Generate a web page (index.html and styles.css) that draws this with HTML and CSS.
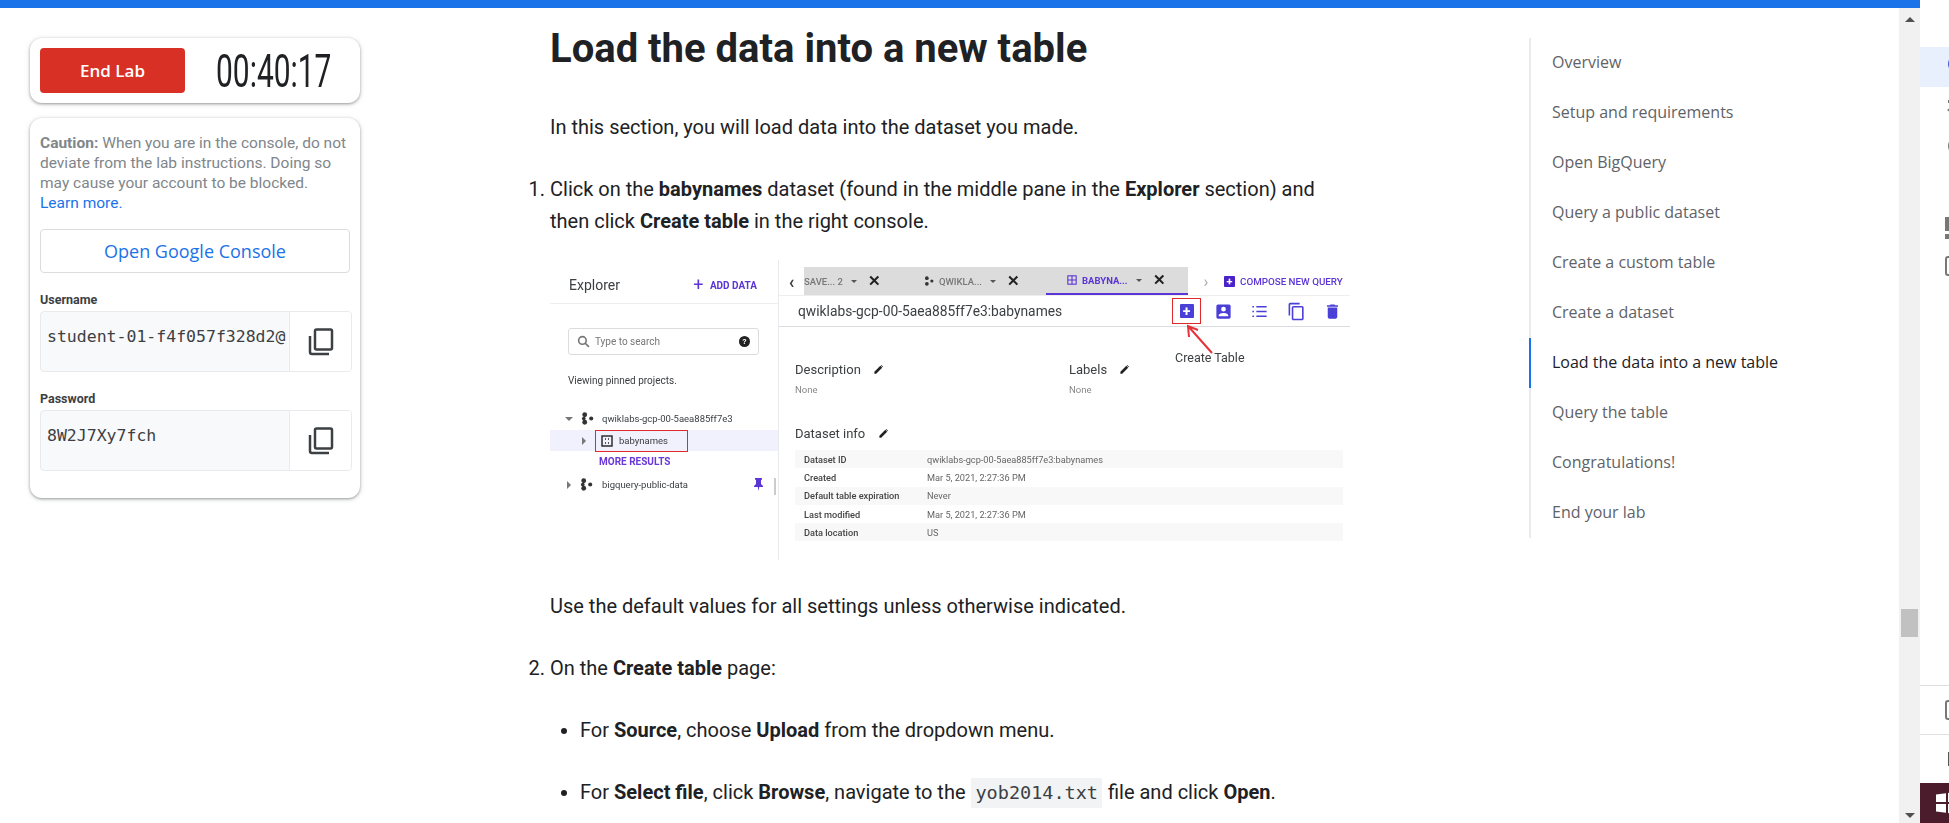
FILE: index.html
```html
<!DOCTYPE html>
<html lang="en">
<head>
    <meta charset="UTF-8">
    <meta name="viewport" content="width=device-width, initial-scale=1.0">
    <title>Load the data into a new table</title>
    <link rel="stylesheet" href="styles.css">
</head>
<body>
<div class="app">
    <div class="topbar"></div>
    <div class="workspace">
        <aside class="lab-panel">
            <div class="card timer-card">
                <button class="end-lab">End Lab</button>
                <span class="timer"><span class="timer-digits">00:40:17</span></span>
            </div>
            <div class="card console-card">
                <p class="caution"><b>Caution:</b> When you are in the console, do not deviate from the lab instructions. Doing so may cause your account to be blocked. <a href="#">Learn more.</a></p>
                <button class="open-console">Open Google Console</button>
                <label class="field-label">Username</label>
                <div class="field">
                    <span class="field-value">student-01-f4f057f328d2@</span>
                    <span class="field-copy"><svg width="26" height="30" viewBox="0 0 26 30" fill="none" stroke="#3c4043" stroke-width="2.5"><rect x="7" y="2.5" width="17" height="20" rx="1.5"/><path d="M2 9v16a2 2 0 0 0 2 2h17"/></svg></span>
                </div>
                <label class="field-label">Password</label>
                <div class="field">
                    <span class="field-value">8W2J7Xy7fch</span>
                    <span class="field-copy"><svg width="26" height="30" viewBox="0 0 26 30" fill="none" stroke="#3c4043" stroke-width="2.5"><rect x="7" y="2.5" width="17" height="20" rx="1.5"/><path d="M2 9v16a2 2 0 0 0 2 2h17"/></svg></span>
                </div>
            </div>
        </aside>

        <main class="lesson">
            <h1>Load the data into a new table</h1>
            <p>In this section, you will load data into the dataset you made.</p>
            <ol>
                <li>
                    <p>Click on the <b>babynames</b> dataset (found in the middle pane in the <b>Explorer</b> section) and then click <b>Create table</b> in the right console.</p>
                    <div class="shot">
                        <div class="shot-left">
                            <div class="explorer-head"><span>Explorer</span><span class="add-data"><i class="plus">+</i> ADD DATA</span></div>
                            <div class="search-box">
                                <svg width="13" height="13" viewBox="0 0 24 24" fill="none" stroke="#777" stroke-width="3"><circle cx="10" cy="10" r="7"/><path d="M15 15l7 7"/></svg>
                                <span>Type to search</span>
                                <span class="help-dot">?</span>
                            </div>
                            <div class="pinned">Viewing pinned projects.</div>
                            <div class="tree-row"><i class="caret-down"></i><svg class="project" width="13" height="13" viewBox="0 0 14 14"><circle cx="4" cy="3" r="2.6"/><circle cx="4" cy="11" r="2.6"/><circle cx="11" cy="7" r="2.2"/><circle cx="3" cy="7" r="2"/></svg><span>qwiklabs-gcp-00-5aea885ff7e3</span></div>
                            <div class="tree-row dataset-row">
                                <i class="caret-right"></i>
                                <span class="red-box"><svg width="12" height="12" viewBox="0 0 12 12" fill="none" stroke="#222" stroke-width="1.4"><rect x="1" y="1" width="10" height="10"/><path d="M4 4h1M7 4h1M4 8h1M7 8h1"/></svg><span>babynames</span></span>
                            </div>
                            <div class="more-results">MORE RESULTS</div>
                            <div class="tree-row public-row"><i class="caret-right"></i><svg class="project" width="13" height="13" viewBox="0 0 14 14"><circle cx="4" cy="3" r="2.6"/><circle cx="4" cy="11" r="2.6"/><circle cx="11" cy="7" r="2.2"/><circle cx="3" cy="7" r="2"/></svg><span>bigquery-public-data</span><svg class="pin" width="11" height="13" viewBox="0 0 11 13"><path d="M2 0h7v1.500L8 2v4l2 2v1H6.200L5.500 13 4.800 9H1V8l2-2V2L2 1.500z"/></svg></div>
                            <span class="pane-scroll"></span>
                        </div>
                        <div class="shot-right">
                            <div class="tabs">
                                <span class="tab-prev">‹</span>
                                <div class="tab-strip">
                                    <span class="tab tab-save">SAVE... 2 <i class="tab-caret"></i><b class="tab-x">✕</b></span>
                                    <span class="tab tab-qwik"><svg class="project" width="10" height="10" viewBox="0 0 14 14"><circle cx="4" cy="3" r="2.6"/><circle cx="4" cy="11" r="2.6"/><circle cx="11" cy="7" r="2.2"/></svg>QWIKLA... <i class="tab-caret"></i><b class="tab-x">✕</b></span>
                                    <span class="tab tab-active"><svg width="10" height="10" viewBox="0 0 12 12" fill="none" stroke="#5b35d5" stroke-width="1.3"><rect x="1" y="1" width="10" height="10"/><path d="M1 6h10M6 1v10"/></svg>BABYNA... <i class="tab-caret"></i><b class="tab-x">✕</b></span>
                                </div>
                                <span class="tab-next">›</span>
                                <span class="compose"><i class="compose-icon">+</i>COMPOSE NEW QUERY</span>
                            </div>
                            <div class="dataset-bar">
                                <span class="dataset-title">qwiklabs-gcp-00-5aea885ff7e3:babynames</span>
                                <span class="tool-create"><i class="compose-icon big">+</i></span>
                                <span class="tool"><svg width="19" height="19" viewBox="0 0 24 24" fill="#4a3fd6"><path d="M3 5v14a2 2 0 0 0 2 2h14a2 2 0 0 0 2-2V5a2 2 0 0 0-2-2H5a2 2 0 0 0-2 2zm12 4a3 3 0 1 1-6 0 3 3 0 0 1 6 0zm-9 8c0-2 4-3 6-3s6 1 6 3v1H6v-1z"/></svg></span>
                                <span class="tool"><svg width="19" height="19" viewBox="0 0 24 24" fill="none" stroke="#4a3fd6" stroke-width="2"><path d="M8 6h13M8 12h13M8 18h13M3 6h2M3 12h2M3 18h2"/></svg></span>
                                <span class="tool"><svg width="19" height="19" viewBox="0 0 24 24" fill="#4a3fd6"><path d="M16 1H4c-1 0-2 1-2 2v14h2V3h12V1zm3 4H8c-1 0-2 1-2 2v14c0 1 1 2 2 2h11c1 0 2-1 2-2V7c0-1-1-2-2-2zm0 16H8V7h11v14z"/></svg></span>
                                <span class="tool"><svg width="19" height="19" viewBox="0 0 24 24" fill="#4a3fd6"><path d="M6 19c0 1 1 2 2 2h8c1 0 2-1 2-2V7H6v12zM19 4h-3.500l-1-1h-5l-1 1H5v2h14V4z"/></svg></span>
                            </div>
                            <div class="create-note">Create Table</div>
                            <svg class="create-arrow" width="30" height="32" viewBox="0 0 30 32" fill="none" stroke="#e5333a" stroke-width="2"><path d="M27 29L3 2M4 13L3 2 13 6"/></svg>
                            <div class="meta-row">
                                <div class="meta-col">
                                    <div class="meta-title">Description <svg class="pencil" width="11" height="11" viewBox="0 0 24 24"><path d="M3 21v-4L16 4l4 4L7 21zM18 2l4 4-1 1-4-4z"/></svg></div>
                                    <div class="meta-none">None</div>
                                </div>
                                <div class="meta-col">
                                    <div class="meta-title">Labels <svg class="pencil" width="11" height="11" viewBox="0 0 24 24"><path d="M3 21v-4L16 4l4 4L7 21zM18 2l4 4-1 1-4-4z"/></svg></div>
                                    <div class="meta-none">None</div>
                                </div>
                            </div>
                            <div class="meta-title info-title">Dataset info <svg class="pencil" width="11" height="11" viewBox="0 0 24 24"><path d="M3 21v-4L16 4l4 4L7 21zM18 2l4 4-1 1-4-4z"/></svg></div>
                            <div class="info-table">
                                <div class="info-row"><b>Dataset ID</b><span>qwiklabs-gcp-00-5aea885ff7e3:babynames</span></div>
                                <div class="info-row"><b>Created</b><span>Mar 5, 2021, 2:27:36 PM</span></div>
                                <div class="info-row"><b>Default table expiration</b><span>Never</span></div>
                                <div class="info-row"><b>Last modified</b><span>Mar 5, 2021, 2:27:36 PM</span></div>
                                <div class="info-row"><b>Data location</b><span>US</span></div>
                            </div>
                        </div>
                    </div>
                    <p>Use the default values for all settings unless otherwise indicated.</p>
                </li>
                <li>
                    <p>On the <b>Create table</b> page:</p>
                    <ul>
                        <li><p>For <b>Source</b>, choose <b>Upload</b> from the dropdown menu.</p></li>
                        <li><p>For <b>Select file</b>, click <b>Browse</b>, navigate to the <code>yob2014.txt</code> file and click <b>Open</b>.</p></li>
                    </ul>
                </li>
            </ol>
        </main>

        <nav class="toc">
            <a href="#">Overview</a>
            <a href="#">Setup and requirements</a>
            <a href="#">Open BigQuery</a>
            <a href="#">Query a public dataset</a>
            <a href="#">Create a custom table</a>
            <a href="#">Create a dataset</a>
            <a href="#" class="active">Load the data into a new table</a>
            <a href="#">Query the table</a>
            <a href="#">Congratulations!</a>
            <a href="#">End your lab</a>
        </nav>

        <div class="scrollbar">
            <i class="arrow-up"></i>
            <span class="thumb"></span>
            <i class="arrow-down"></i>
        </div>
    </div>
</div>

<div class="rail">
    <div class="rail-item rail-active"><svg width="24" height="24" viewBox="0 0 24 24" fill="none" stroke="#3b5fc4" stroke-width="2"><circle cx="12" cy="12" r="8"/></svg></div>
    <div class="rail-item rail-gap1"><svg width="24" height="24" viewBox="0 0 24 24" fill="#777"><path d="M2 12l7-5v10z"/><rect x="3" y="2" width="8" height="3"/></svg></div>
    <div class="rail-item rail-gap2"><svg width="24" height="24" viewBox="0 0 24 24" fill="none" stroke="#777" stroke-width="2"><circle cx="12" cy="12" r="8"/></svg></div>
    <div class="rail-item rail-gap3"><svg width="24" height="24" viewBox="0 0 24 24" fill="#777"><rect x="0" y="1" width="5" height="14"/><rect x="0" y="18" width="5" height="5"/></svg></div>
    <div class="rail-item rail-gap4"><svg width="24" height="24" viewBox="0 0 24 24" fill="none" stroke="#777" stroke-width="2"><rect x="1" y="3" width="18" height="18" rx="2"/><path d="M6 9h9M6 15h9"/></svg></div>
    <div class="rail-bottom">
        <div class="rail-cell"><svg width="24" height="24" viewBox="0 0 24 24" fill="none" stroke="#777" stroke-width="2"><rect x="1" y="3" width="18" height="18" rx="2"/><path d="M6 9h9M6 15h9"/></svg></div>
        <div class="rail-cell"><svg width="24" height="24" viewBox="0 0 24 24" fill="#555"><rect x="3" y="5" width="3" height="14"/></svg></div>
        <div class="rail-win"><svg width="24" height="24" viewBox="0 0 24 24" fill="#fff"><path d="M0 3.500l10-1.300V11H0zM12 2l12-1.600V11H12zM0 13h10v8.800L0 20.500zM12 13h12v10.600L12 22z"/></svg></div>
    </div>
</div>
</body>
</html>
```

FILE: styles.css
```css
*{box-sizing:border-box;}
html,body{margin:0;height:100%;overflow:hidden;}
body{display:flex;font-family:Roboto,sans-serif;color:#202124;background:#fff;}

.app{width:1920px;height:823px;display:flex;flex-direction:column;flex:none;}
.topbar{height:8px;background:#1a73e8;flex:none;}
.workspace{flex:1;display:flex;min-height:0;}

/* left lab panel */
.lab-panel{width:390px;flex:none;padding:30px 30px 0;}
.card{background:#fff;border-radius:12px;box-shadow:0 1px 3px rgba(60,64,67,.5),0 1px 6px rgba(60,64,67,.1);}
.timer-card{height:65px;padding:10px;display:flex;align-items:center;}
.end-lab{width:145px;height:45px;flex:none;background:#d93025;color:#fff;border:0;border-radius:4px;font:600 17px "Open Sans",sans-serif;}
.timer{flex:1;min-width:0;text-align:center;white-space:nowrap;}
.timer-digits{display:inline-block;font:400 46px/46px Roboto,sans-serif;color:#202124;transform:scaleX(.65);}
.console-card{margin-top:15px;height:380px;padding:15px 10px;}
.caution{margin:0;font-size:15.5px;line-height:20px;color:#80868b;}
.caution b{font-weight:700;}
.caution a{color:#1a73e8;text-decoration:none;display:block;}
.open-console{display:block;width:310px;height:44px;margin-top:16px;background:#fff;border:1px solid #dadce0;border-radius:4px;color:#1a73e8;font:500 18px "Open Sans",sans-serif;}
.field-label{display:block;margin-top:19px;font-size:12.5px;font-weight:700;line-height:16px;color:#3c4043;}
.field-label + .field{margin-top:3px;}
.field{width:312px;height:61px;display:flex;border:1px solid #e8eaed;border-radius:4px;background:#f8f9fa;overflow:hidden;}
.field-value{flex:1;min-width:0;padding:14px 0 0 6px;font:16.5px/22px "DejaVu Sans Mono",monospace;color:#3c4043;white-space:nowrap;overflow:hidden;}
.field-copy{width:62px;flex:none;background:#fff;border-left:1px solid #e8eaed;display:flex;align-items:center;justify-content:center;}

/* lesson column */
.lesson{width:800px;margin-left:160px;flex:none;font-size:20px;line-height:32px;}
.lesson h1{margin:11px 0 0;font:700 40px/60px Roboto,sans-serif;color:#202124;}
.lesson p{margin:0;padding:0;}
.lesson > p{margin-top:32px;}
.lesson ol{margin:30px 0 0;padding:0;list-style-position:outside;}
.lesson ol > li{margin-bottom:30px;}
.lesson ul{margin:30px 0 0;padding:0 0 0 30px;list-style:disc;}
.lesson ul li{margin-bottom:30px;}
.lesson code{display:inline-block;padding:0 4px;margin:0 1px;background:#f1f3f4;font:18.5px/30px "DejaVu Sans Mono",monospace;color:#3c4043;}

/* pasted screenshot, redrawn */
.shot{position:relative;height:305px;width:800px;margin:23px 0 25px;display:flex;filter:blur(.35px);font-family:Roboto,sans-serif;line-height:normal;color:#3c4043;}
.shot-left{position:relative;width:229px;height:300px;flex:none;border-right:1px solid #e8eaed;}
.explorer-head{display:flex;justify-content:space-between;align-items:center;height:44px;padding:6px 21px 0 19px;font-size:14px;border-bottom:1px solid #eee;}
.add-data{font-size:10px;font-weight:700;color:#5b35d5;}
.plus{font-style:normal;font-size:18px;font-weight:400;vertical-align:-2px;margin-right:4px;}
.search-box{display:flex;align-items:center;gap:5px;width:191px;height:27px;margin:24px 0 0 18px;padding:0 8px;border:1px solid #dadce0;border-radius:3px;font-size:10px;color:#777;}
.help-dot{margin-left:auto;width:11px;height:11px;border-radius:50%;background:#222;color:#fff;font:700 8px/11px Roboto,sans-serif;text-align:center;}
.pinned{margin:20px 0 0 18px;font-size:10px;}
.tree-row{display:flex;align-items:center;height:21px;margin-top:22px;padding-left:15px;font-size:9.5px;gap:8px;}
.project{fill:#333;flex:none;}
.caret-down{width:0;height:0;border:4px solid transparent;border-top:4px solid #777;border-bottom:0;flex:none;}
.caret-right{width:0;height:0;border:4px solid transparent;border-left:4px solid #777;border-right:0;flex:none;}
.dataset-row{margin-top:1px;background:#f0f1fd;padding-left:32px;gap:9px;}
.red-box{display:flex;align-items:center;gap:6px;width:93px;height:22px;padding-left:5px;border:1px solid #e02a2a;}
.more-results{margin:5px 0 0 49px;font-size:10px;font-weight:700;color:#6a37d9;}
.public-row{margin-top:7px;padding-left:17px;gap:9px;}
.pin{margin-left:auto;margin-right:14px;fill:#5b35d5;flex:none;}
.pane-scroll{position:absolute;left:224px;top:218px;width:2px;height:17px;background:#ccc;}

.shot-right{position:relative;width:571px;flex:none;padding-top:7px;}
.tabs{display:flex;align-items:center;height:29px;border-bottom:1px solid #eee;}
.tab-prev{width:25px;text-align:center;font-size:18px;font-weight:700;flex:none;}
.tab-next{width:36px;text-align:center;font-size:16px;color:#aaa;flex:none;}
.tab-strip{display:flex;width:384px;height:28px;background:#dcdcdc;flex:none;font-size:9.5px;font-weight:500;color:#777;}
.tab{display:flex;align-items:center;gap:5px;height:28px;white-space:nowrap;}
.tab-save{width:115px;}
.tab-qwik{width:127px;padding-left:5px;}
.tab-active{width:142px;padding-left:21px;color:#5b35d5;font-weight:700;border-bottom:2px solid #5b35d5;}
.tab-caret{width:0;height:0;border:3px solid transparent;border-top:3px solid #555;border-bottom:0;margin-left:3px;}
.tab-x{color:#222;font-size:15px;margin-left:6px;}
.compose{display:flex;align-items:center;gap:5px;font-size:9.8px;font-weight:500;color:#5b35d5;white-space:nowrap;}
.compose-icon{display:inline-block;width:11px;height:11px;border-radius:1px;background:#4a22c9;color:#fff;font:700 11px/11px Roboto,sans-serif;text-align:center;font-style:normal;}
.compose-icon.big{width:14px;height:14px;font-size:14px;line-height:14px;background:#4a3fd6;}
.dataset-bar{display:flex;align-items:center;height:31px;padding-left:19px;border-bottom:1px solid #dadce0;}
.dataset-title{width:367px;flex:none;font-size:13.8px;white-space:nowrap;}
.tool{display:flex;justify-content:center;width:36.5px;flex:none;}
.tool-create{display:flex;justify-content:center;align-items:center;width:29px;height:26px;margin:0 4px 0 7px;flex:none;border:1.5px solid #e02a2a;}
.create-note{position:absolute;left:396px;top:90px;font-size:12.5px;}
.create-arrow{position:absolute;left:406px;top:64px;}
.meta-row{display:flex;margin-top:35px;padding-left:16px;}
.meta-col{width:274px;}
.meta-title{font-size:13px;line-height:16px;}
.pencil{margin-left:9px;vertical-align:-1px;fill:#222;}
.meta-none{margin-top:6px;font-size:9.5px;color:#888;}
.info-title{margin:31px 0 0 16px;}
.info-table{width:548px;margin:8px 0 0 16px;}
.info-row{display:flex;align-items:center;height:18.3px;padding-left:9px;font-size:9.2px;}
.info-row:nth-child(odd){background:#f8f8f8;}
.info-row b{width:123px;font-weight:500;color:#444;}
.info-row span{color:#666;}

/* right hand contents */
.toc{width:349px;margin-left:179px;flex:none;align-self:flex-start;margin-top:30px;border-left:2px solid #e8eaed;}
.toc a{display:block;height:50px;padding-left:21px;font:500 16px/48px "Open Sans",sans-serif;color:#5f6368;text-decoration:none;white-space:nowrap;}
.toc a.active{color:#202124;border-left:2px solid #1a73e8;margin-left:-2px;}

.scrollbar{margin-left:21px;width:21px;flex:none;background:#f1f1f1;display:flex;flex-direction:column;align-items:center;}
.arrow-up{width:0;height:0;border:5px solid transparent;border-bottom:5px solid #505050;border-top:0;margin-top:9px;}
.thumb{width:17px;height:28px;background:#c1c1c1;margin-top:587px;}
.arrow-down{width:0;height:0;border:5px solid transparent;border-top:5px solid #505050;border-bottom:0;margin-top:176px;}

.rail{width:29px;flex:none;height:823px;display:flex;flex-direction:column;overflow:hidden;background:#fff;}
.rail-item{height:24px;padding-left:25px;flex:none;}
.rail-active{height:40px;margin-top:47px;padding-top:5px;background:#e8f0fe;}
.rail-item svg,.rail-cell svg,.rail-win svg{display:block;}
.rail-gap1{margin-top:11px;}
.rail-gap2{margin-top:12px;}
.rail-gap3{margin-top:58px;}
.rail-gap4{margin-top:14px;}
.rail-bottom{margin-top:auto;}
.rail-cell{height:49px;padding:12px 0 0 25px;border-top:1px solid #e0e0e0;}
.rail-win{height:40px;padding:8px 0 0 16px;background:#4a1c2c;}
```
